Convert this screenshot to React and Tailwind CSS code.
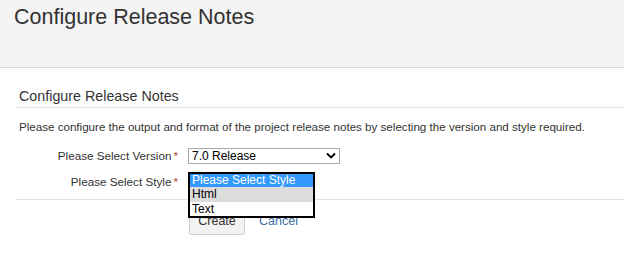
import React from "react";

export default function App() {
  return (
    <div className="w-[624px] h-[260px] bg-white overflow-hidden font-['Liberation_Sans',Arial,sans-serif] text-[#333]">
      {/* page header */}
      <div className="h-[68px] bg-[#f4f4f4] border-b border-[#d6d6d6] pl-[14px] pt-[4px]">
        <h1 className="text-[21.5px] leading-[26px] text-[#333]">Configure Release Notes</h1>
      </div>

      <div className="pl-[15px] pt-[19px]">
        <h2 className="text-[14.3px] leading-[18px] pl-[4px] pb-[2px] border-b border-[#e2e2e2]">
          Configure Release Notes
        </h2>
        <p className="text-[11.6px] leading-[14px] pl-[4px] mt-[12px]">
          Please configure the output and format of the project release notes by selecting the version and style required.
        </p>

        <div className="mt-[13px] flex flex-col gap-[9px]">
          <div className="flex items-center">
            <label className="w-[173px] text-right text-[11.7px] pr-[10px]">
              Please Select Version<span className="text-[#a94442] ml-[2px]">*</span>
            </label>
            <div className="w-[152px] h-[16px] border border-[#a9a9a9] flex items-center justify-between pl-[3px] pr-[3px] text-[12px] text-black bg-white">
              <span>7.0 Release</span>
              <svg width="10" height="7" viewBox="0 0 10 7" fill="none" stroke="#000" strokeWidth="1.8">
                <path d="M1 1.5 L5 5.5 L9 1.5" />
              </svg>
            </div>
          </div>

          <div className="flex items-start relative">
            <label className="w-[173px] text-right text-[11.7px] pr-[10px] leading-[16px]">
              Please Select Style<span className="text-[#a94442] ml-[2px]">*</span>
            </label>
            <div className="w-[126px] h-[16px]" />
            {/* open dropdown list */}
            <div className="absolute left-[173px] top-[-2px] w-[127px] border-2 border-black bg-white text-[12px] leading-[14px] text-black z-10">
              <div className="bg-[#3399ff] text-white px-[2px] h-[13px] leading-[13px]">Please Select Style</div>
              <div className="bg-[#dcdcdc] px-[2px] h-[15px] leading-[15px]">Html</div>
              <div className="px-[2px] h-[14px] leading-[14px]">Text</div>
            </div>
          </div>
        </div>

        <div className="mt-[9px] border-t border-[#e2e2e2]" />

        <div className="flex items-center pl-[174px] mt-[5px] gap-[14px]">
          <button className="w-[56px] h-[30px] bg-[#f2f2f2] border border-[#d0d0d0] rounded-[2px] text-[12.5px] text-[#333] pt-[4px]">
            Create
          </button>
          <a className="text-[12.5px] text-[#3d6ea7] pt-[4px]">Cancel</a>
        </div>
      </div>
    </div>
  );
}
